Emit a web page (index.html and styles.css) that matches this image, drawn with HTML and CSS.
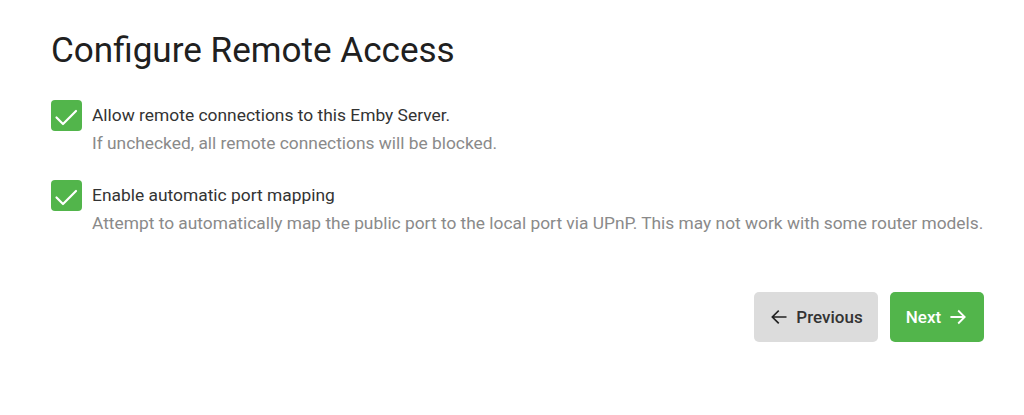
FILE: index.html
```html
<!DOCTYPE html>
<html>
<head>
<meta charset="utf-8">
<link rel="stylesheet" href="styles.css">
</head>
<body>
<div class="page">
  <h1 class="title">Configure Remote Access</h1>
  <div class="option">
    <div class="check"><svg viewBox="0 0 31 31" width="31" height="31"><path d="M5.5 17.5L12 24L25 11" fill="none" stroke="#fff" stroke-width="2.2" stroke-linecap="round" stroke-linejoin="round"/></svg></div>
    <div class="texts">
      <div class="label">Allow remote connections to this Emby Server.</div>
      <div class="desc">If unchecked, all remote connections will be blocked.</div>
    </div>
  </div>
  <div class="option">
    <div class="check"><svg viewBox="0 0 31 31" width="31" height="31"><path d="M5.5 17.5L12 24L25 11" fill="none" stroke="#fff" stroke-width="2.2" stroke-linecap="round" stroke-linejoin="round"/></svg></div>
    <div class="texts">
      <div class="label">Enable automatic port mapping</div>
      <div class="desc">Attempt to automatically map the public port to the local port via UPnP. This may not work with some router models.</div>
    </div>
  </div>
  <div class="actions">
    <button class="btn btn-prev"><svg viewBox="0 0 24 24" width="20" height="20"><path d="M20 12H5M11 5l-7 7 7 7" fill="none" stroke="#222" stroke-width="2" stroke-linecap="square"/></svg><span>Previous</span></button>
    <button class="btn btn-next"><span>Next</span><svg viewBox="0 0 24 24" width="20" height="20"><path d="M4 12h15M13 5l7 7-7 7" fill="none" stroke="#fff" stroke-width="2.2" stroke-linecap="square"/></svg></button>
  </div>
</div>
</body>
</html>
```
FILE: styles.css
```css
html, body { margin: 0; padding: 0; background: #fff; }
body { font-family: Roboto, "Noto Sans", sans-serif; color: #222; }
.page { padding: 28px 0 0 51px; }
.title { font-size: 35.1px; font-weight: 400; margin: 0 0 28px; line-height: 44px; color: #202020; }
.option { display: flex; gap: 10px; margin-bottom: 26px; }
.check { width: 31px; height: 31px; flex: none; background: #52b54b; border-radius: 4px; display: flex; }
.label { font-size: 17.4px; line-height: 30px; color: #333; white-space: nowrap; }
.desc { font-size: 17.35px; line-height: 22px; color: #8a8a8a; margin-top: 2px; white-space: nowrap; }
.actions { display: flex; justify-content: flex-end; gap: 12px; margin-top: 58px; width: 933px; }
.btn { border: 0; border-radius: 5px; height: 50px; font-family: Roboto, sans-serif; font-size: 17px; font-weight: 500; display: flex; align-items: center; justify-content: center; gap: 7px; padding: 0; cursor: pointer; }
.btn-prev { background: #dcdcdc; color: #333; width: 124px; }
.btn-next { background: #52b54b; color: #fff; width: 94px; }
```
